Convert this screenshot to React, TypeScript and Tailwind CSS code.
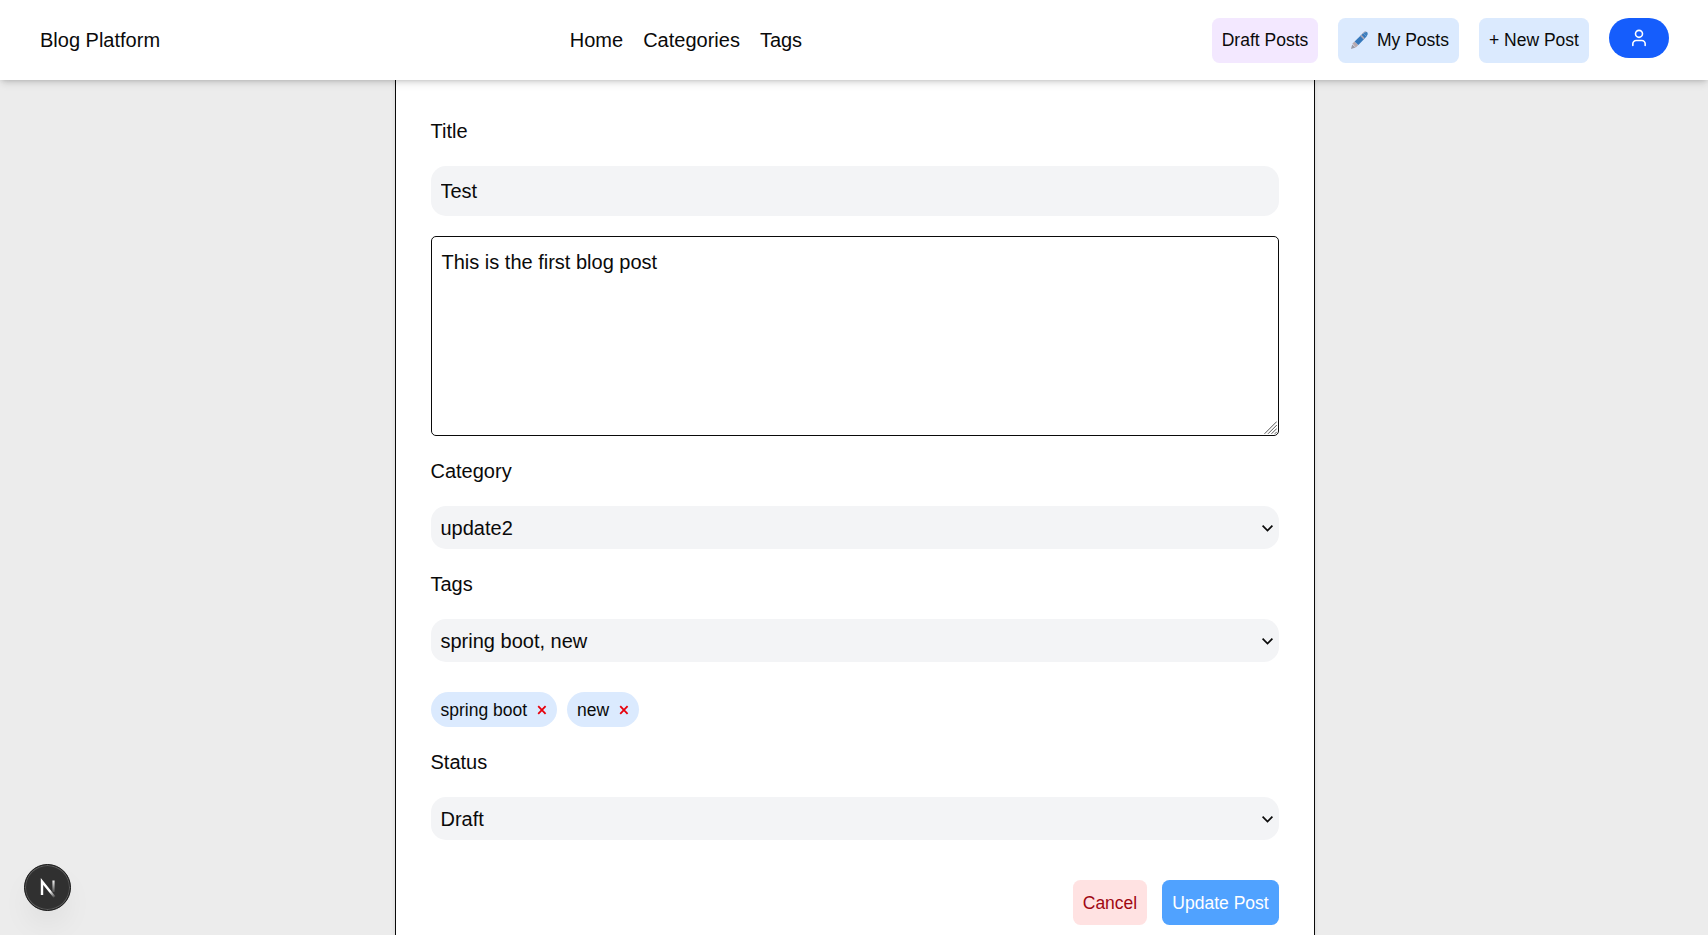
import React from "react";

function Chevron() {
  return (
    <svg className="pointer-events-none mr-[6px] mt-[2px] h-[7px] w-[11px] shrink-0" viewBox="0 0 11 7" fill="none" stroke="#0a0a0a" strokeWidth="1.7">
      <path d="M0.6 0.6 L5.5 5.6 L10.4 0.6" />
    </svg>
  );
}

function SelectField({ label, value }: { label: string; value: string }) {
  return (
    <>
      <label className="h-[30px] leading-[30px]">{label}</label>
      <button type="button" className="flex h-[43px] items-center justify-between rounded-[15px] bg-gray-100 pl-[10px] text-left leading-[23px]">
        <span className="pt-[2px]">{value}</span>
        <Chevron />
      </button>
    </>
  );
}

function Chip({ text }: { text: string }) {
  return (
    <span className="flex h-[35px] items-center rounded-full bg-blue-100 px-[10px] text-[17.5px] leading-[25px]">
      <span className="pt-px">{text}</span>
      <button type="button" aria-label={`Remove ${text}`} className="ml-[10px]">
        <svg className="mt-px h-[10px] w-[10px]" viewBox="0 0 10 10" stroke="#e7000b" strokeWidth="1.8">
          <path d="M1.2 1.2 L8.6 8.8 M8.6 1.2 L1.2 8.8" />
        </svg>
      </button>
    </span>
  );
}

function PenIcon() {
  return (
    <svg className="h-[19px] w-[19px]" viewBox="0 0 19 19">
      <path d="M1 18 L2.2 13.5 L5.6 16.6 Z" fill="#9a9aa6" />
      <path d="M2.4 12.6 L4.6 10.4 L8.4 14 L5.8 16.4 Z" fill="#b7a9ae" />
      <path d="M4.6 10.4 L13 2.2 L16.6 5.6 L8.4 14 Z" fill="#3578bb" />
      <path d="M10.2 5 L11.4 3.8 L14.8 7.2 L13.6 8.4 Z" fill="#a9a5b5" />
      <path d="M13 2.2 L15 0.8 Q17.8 0.2 17.8 3 L16.6 5.6 Z" fill="#3f7fbd" />
      <path d="M12 3 L14.6 0.9 L16.2 0.7" stroke="#b7b3c0" strokeWidth="1" fill="none" />
    </svg>
  );
}

export default function App() {
  return (
    <div className="flex h-screen flex-col overflow-hidden bg-[#ececec] font-['Liberation_Sans',Arial,sans-serif] text-[20px] text-[#0a0a0a]">
      <header className="relative z-10 flex h-[80px] shrink-0 justify-between bg-white pr-[39px] pl-[40px] shadow-[0_5px_7.5px_-1px_rgba(0,0,0,0.1),0_2.5px_5px_-2.5px_rgba(0,0,0,0.1),0_0_5px_rgba(0,0,0,0.1)]">
        <div className="w-[529.8px] leading-[80px]">Blog Platform</div>
        <nav className="flex flex-1 gap-[20px] leading-[80px]">
          <a>Home</a>
          <a>Categories</a>
          <a>Tags</a>
        </nav>
        <div className="flex items-start gap-[20px] pt-[18px] text-[17.5px] leading-[25px]">
          <button className="h-[45px] w-[106px] rounded-[7.5px] bg-purple-100 whitespace-nowrap">Draft Posts</button>
          <button className="flex h-[45px] w-[121px] items-center gap-[8px] rounded-[7.5px] bg-blue-100 pl-[12px] whitespace-nowrap">
            <PenIcon />
            My Posts
          </button>
          <button className="h-[45px] w-[110px] rounded-[7.5px] bg-blue-100 whitespace-nowrap">+ New Post</button>
          <button aria-label="Account" className="flex h-[40px] w-[60px] items-center justify-center rounded-full bg-[#155dfc]">
            <svg className="h-[20px] w-[20px]" viewBox="0 0 24 24" fill="none" stroke="white" strokeWidth="1.9" strokeLinecap="round" strokeLinejoin="round">
              <circle cx="12" cy="7" r="4.2" />
              <path d="M19.4 21v-2a4 4 0 0 0-4-4H8.6a4 4 0 0 0-4 4v2" />
            </svg>
          </button>
        </div>
      </header>
      <main className="flex min-h-0 flex-1 justify-center pl-[2px]">
        <form className="flex w-[920px] flex-col gap-[20px] border-x border-[#0a0a0a] bg-white pr-[35px] pl-[34.5px] pt-[36px] shadow-[0_1px_4px_rgba(0,0,0,0.1)]">
          <label className="h-[30px] leading-[30px]">Title</label>
          <input className="h-[50px] shrink-0 rounded-[15px] bg-gray-100 px-[10px] outline-none" defaultValue="Test" />
          <div className="relative h-[200px] shrink-0">
            <textarea className="block h-full w-full resize-none rounded-[5px] border border-[#0a0a0a] p-[10px] leading-[30px] outline-none" defaultValue="This is the first blog post" />
            <svg className="pointer-events-none absolute right-[2px] bottom-[2px] h-[13px] w-[13px]" viewBox="0 0 13 13" stroke="#555" strokeWidth="1">
              <path d="M0.5 12.8 L12.8 0.5 M4 12.8 L12.8 4 M7.5 12.8 L12.8 7.5 M10.8 12.8 L12.8 10.8" />
            </svg>
          </div>
          <SelectField label="Category" value="update2" />
          <SelectField label="Tags" value="spring boot, new" />
          <div className="mt-[10px] flex gap-[10px]">
            <Chip text="spring boot" />
            <Chip text="new" />
          </div>
          <SelectField label="Status" value="Draft" />
          <div className="mt-[20px] flex justify-end gap-[15px] text-[17.5px] leading-[25px]">
            <button type="button" className="h-[45px] w-[74px] rounded-[7.5px] bg-[#ffe2e2] pt-px text-[#9f0712]">Cancel</button>
            <button type="button" className="h-[45px] w-[117px] rounded-[7.5px] bg-[#50a2ff] pt-px whitespace-nowrap text-white">Update Post</button>
          </div>
        </form>
      </main>
      <button aria-label="Developer tools" className="absolute bottom-[24px] left-[24px] z-20 flex h-[47px] w-[47px] items-center justify-center rounded-full border border-[#171717] bg-[#303030] shadow-[inset_0_0_0_1px_#5a5a5a,0_16px_32px_-8px_rgba(0,0,0,0.1)]">
        <svg className="h-[20px] w-[20px]" viewBox="0 0 20 20" fill="none">
          <defs>
            <linearGradient id="stem" x1="0" y1="2" x2="0" y2="16" gradientUnits="userSpaceOnUse">
              <stop stopColor="white" />
              <stop offset="1" stopColor="white" stopOpacity="0" />
            </linearGradient>
            <linearGradient id="diagonal" x1="12" y1="13" x2="17" y2="20" gradientUnits="userSpaceOnUse">
              <stop stopColor="white" />
              <stop offset="1" stopColor="white" stopOpacity="0" />
            </linearGradient>
          </defs>
          <path d="M4 17 V3.5 L16.5 19" stroke="url(#diagonal)" strokeWidth="2.4" />
          <path d="M15.5 2.5 V14" stroke="url(#stem)" strokeWidth="2.2" />
        </svg>
      </button>
    </div>
  );
}
